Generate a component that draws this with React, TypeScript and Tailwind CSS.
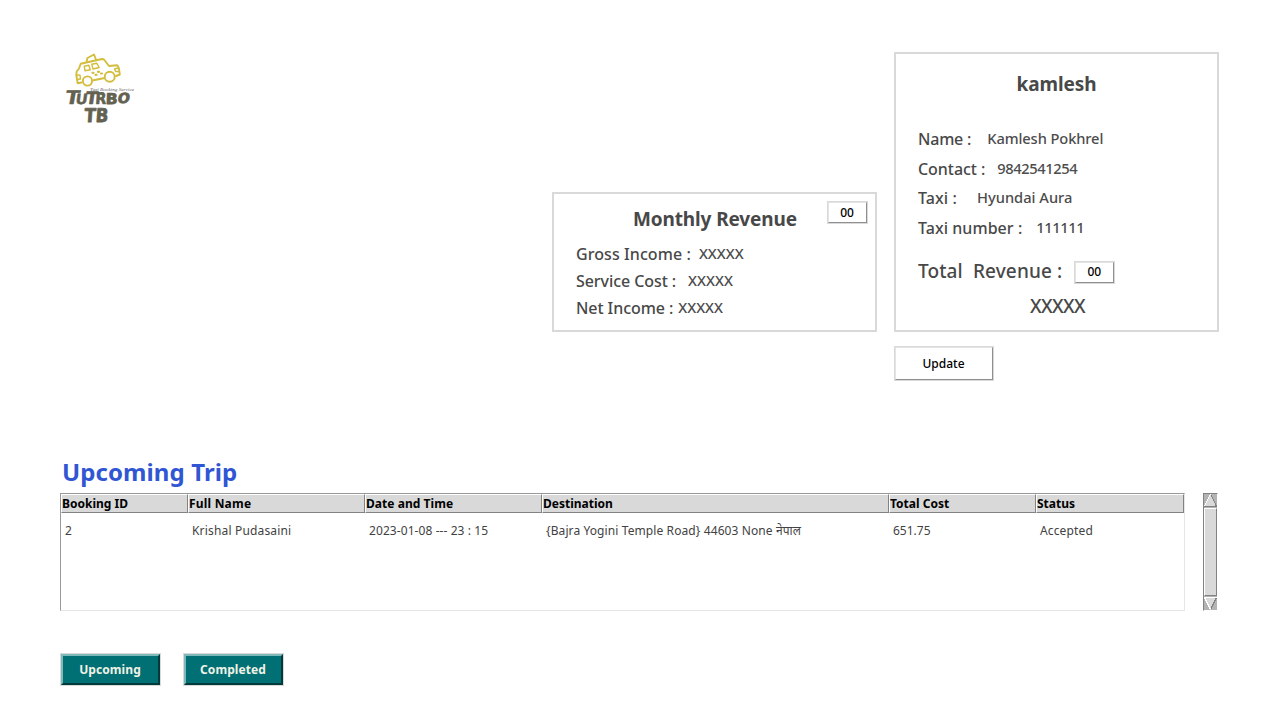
import type { ReactNode } from "react";

function Row({ label, value, className, gap, labelClass = "", valueClass = "" }: {
  label: string; value: string; className: string; gap: string; labelClass?: string; valueClass?: string;
}) {
  return (
    <div className={`flex items-center whitespace-pre font-medium ${className}`}>
      <span className={`text-[16px] ${labelClass} ${gap}`}>{label}</span>
      <span className={`pb-[1.5px] text-[14.67px] text-[#4c4c4c] ${valueClass}`}>{value}</span>
    </div>
  );
}

function PlainButton({ children, className }: { children: ReactNode; className: string }) {
  return (
    <button className={`shrink-0 border border-[#d9d9d9] text-[12px] font-medium text-black ${className}`}>
      <span className="flex h-full w-full items-center justify-center border border-t-[#e4e4e4] border-l-[#e4e4e4] border-r-[#8f8f8f] border-b-[#8f8f8f] pr-px">
        {children}
      </span>
    </button>
  );
}

function TealButton({ children }: { children: ReactNode }) {
  return (
    <button className="h-[33px] w-[101px] border border-[#d9d9d9] text-[12px] font-bold text-[#f2f2e6]">
      <span className="flex h-full w-full items-center justify-center border-2 border-t-[#7fb8b9] border-l-[#7fb8b9] border-r-[#003a3b] border-b-[#003a3b] bg-[#007074] pr-px tracking-[0.07px]">
        {children}
      </span>
    </button>
  );
}

function Logo() {
  return (
    <svg width="80" height="80" viewBox="0 0 80 80" className="block">
      <g fill="none" stroke="#d3bd3c" strokeWidth="1.9" strokeLinejoin="round" strokeLinecap="round">
        <path d="M21.5 30.5 L17.7 31.3 L16.3 23 L16.7 19.5 L19 16.5 L20.7 11.8 L42 7 L44 7.5 L49 14 L57 13.2 Q58.5 14 59 17 L59.8 22.5 L56 24" />
        <path d="M26.5 10 L27.5 6 L34 2.5 L36 7.5" />
        <path d="M17 23 L20 23.2 L20.5 27 L17.5 27.5 M58 16 L54.5 17 L55.5 19.5 L58.5 19.5" strokeWidth="1.4" />
        <path d="M24.3 14.3 L28.8 13.2 L30.3 17.8 L25 18.8 Z M31.8 12.3 L36.7 11.2 L39.2 15.5 L33 17 Z" strokeWidth="1.4" />
        <path d="M33.5 28.3 L43.5 26.3" />
        <circle cx="27.5" cy="29" r="4.6" />
        <circle cx="49.7" cy="24.8" r="5" />
        <path d="M32.5 20.8 h1 M35.5 22.8 h1 M38 19.8 h1 M41 21.5 h1" strokeWidth="2.2" />
      </g>
      <text x="30" y="38.8" fontSize="5" fontStyle="italic" fontFamily="Liberation Serif, serif" fill="#666" textLength="44" lengthAdjust="spacingAndGlyphs">Taxi Booking Service</text>
      <g fill="#636150" stroke="#636150" strokeLinejoin="round" fontFamily="DejaVu Sans, sans-serif" fontWeight="bold">
        <text transform="translate(4.5 52) skewX(-10)" fontSize="19" textLength="14" lengthAdjust="spacingAndGlyphs" strokeWidth="0.4">T</text>
        <text transform="translate(15 51.5) skewX(-8)" fontSize="14" textLength="12" lengthAdjust="spacingAndGlyphs" strokeWidth="0.4">U</text>
        <text transform="translate(25 52) skewX(-8)" fontSize="17" textLength="12" lengthAdjust="spacingAndGlyphs" strokeWidth="0.6">T</text>
        <text transform="translate(35 52) skewX(-4)" fontSize="16" textLength="11" lengthAdjust="spacingAndGlyphs" strokeWidth="0.6">R</text>
        <text transform="translate(45.5 51.5) skewX(-2)" fontSize="15" textLength="12" lengthAdjust="spacingAndGlyphs" strokeWidth="0.8">B</text>
        <text transform="translate(57 51) skewX(-10)" fontSize="14" textLength="12" lengthAdjust="spacingAndGlyphs" strokeWidth="0.8">O</text>
        <text transform="translate(24 70) skewX(-4)" fontSize="19" textLength="24" lengthAdjust="spacingAndGlyphs" strokeWidth="0.8">TB</text>
      </g>
    </svg>
  );
}

const columns = [
  { title: "Booking ID", value: "2", width: "w-[127px]", tracking: "", titleTracking: "" },
  { title: "Full Name", value: "Krishal Pudasaini", width: "w-[177px]", tracking: "tracking-[0.17px]", titleTracking: "tracking-[0.2px]" },
  { title: "Date and Time", value: "2023-01-08 --- 23 : 15", width: "w-[177px]", tracking: "tracking-[0.08px]", titleTracking: "tracking-[0.05px]" },
  { title: "Destination", value: "{Bajra Yogini Temple Road} 44603 None नेपाल", width: "w-[347px]", tracking: "tracking-[0.1px]", titleTracking: "" },
  { title: "Total Cost", value: "651.75", width: "w-[147px]", tracking: "", titleTracking: "" },
  { title: "Status", value: "Accepted", width: "w-[148px]", tracking: "tracking-[0.14px]", titleTracking: "" },
];

function Trips() {
  return (
    <div className="h-[118px] w-[1125px] border border-t-[#999] border-l-[#999] border-r-[#e6e6e6] border-b-[#e6e6e6]">
      <div className="flex h-[19px]">
        {columns.map((c) => (
          <div key={c.title} className={`flex shrink-0 items-center border border-t-white border-l-white border-r-[#828282] border-b-[#828282] bg-[#d9d9d9] text-[12px] leading-none font-bold text-black ${c.width} ${c.titleTracking}`}>
            {c.title}
          </div>
        ))}
      </div>
      <div className="flex h-[35px] items-center whitespace-pre text-[12px] text-[#424242]">
        {columns.map((c) => (
          <div key={c.title} className={`shrink-0 pl-1 ${c.width} ${c.tracking}`}>{c.value}</div>
        ))}
      </div>
    </div>
  );
}

function Scrollbar() {
  return (
    <div className="flex h-[118px] w-[15px] flex-col border border-t-[#828282] border-l-[#828282] border-r-white border-b-white bg-[#b3b3b3]">
      <svg width="13" height="13" viewBox="0 0 13 13" shapeRendering="crispEdges">
        <path d="M6.5 0 L13 13 L0 13 Z" fill="#d9d9d9" />
        <path d="M6.5 0 L12.5 12.5 H0" stroke="#828282" fill="none" />
        <path d="M6.5 0 L0.5 12" stroke="#fff" />
      </svg>
      <div className="my-px flex-1 border border-t-white border-l-white border-r-[#828282] border-b-[#828282] bg-[#d9d9d9]" />
      <svg width="13" height="13" viewBox="0 0 13 13" shapeRendering="crispEdges">
        <path d="M0 0 H13 L6.5 13 Z" fill="#d9d9d9" />
        <path d="M12.5 0.5 L6.5 12.5" stroke="#828282" />
        <path d="M13 0.5 H0.5 L6.5 12.5" stroke="#fff" fill="none" />
      </svg>
    </div>
  );
}

export default function App() {
  return (
    <div className="flex h-[720px] w-[1280px] flex-col overflow-hidden bg-white pt-[52px] pl-[60px] font-['Noto_Sans',sans-serif] text-[#484848]">
      <div className="flex h-[280px] shrink-0">
        <div className="w-[492px]"><Logo /></div>
        <section className="mr-[17px] h-[140px] w-[325px] self-end border-2 border-[#d9d9d9]">
          <div className="flex h-[46px] items-start justify-end pt-[7px] pr-[7px]">
            <h2 className="mr-[30px] pt-[4px] text-[19px] leading-[28px] font-bold tracking-[-0.12px]">Monthly Revenue</h2>
            <PlainButton className="h-[23px] w-[41px]">00</PlainButton>
          </div>
          <div className="pl-[22px]">
            <Row label="Gross Income :" value="XXXXX" className="h-[27px]" gap="mr-2" labelClass="tracking-[0.08px]" />
            <Row label="Service Cost :" value="XXXXX" className="h-[27px]" gap="mr-3" labelClass="tracking-[-0.07px]" />
            <Row label="Net Income :" value="XXXXX" className="h-[27px]" gap="mr-[5px]" labelClass="tracking-[-0.07px]" />
          </div>
        </section>
        <section className="h-[280px] w-[325px] border-2 border-[#d9d9d9] pl-[22px]">
          <h2 className="h-[70px] pt-[16px] pr-[22px] text-center text-[19px] leading-[28px] font-bold tracking-[-0.1px]">kamlesh</h2>
          <Row label="Name :" value="Kamlesh Pokhrel" className="h-[29px]" gap="mr-4" labelClass="tracking-[-0.2px]" valueClass="tracking-[-0.1px]" />
          <Row label="Contact :" value="9842541254" className="h-[31px]" gap="mr-3" labelClass="tracking-[-0.05px]" valueClass="tracking-[-0.39px]" />
          <Row label="Taxi :" value="Hyundai Aura" className="h-[28px]" gap="mr-5" labelClass="tracking-[0.1px]" />
          <Row label="Taxi number :" value="111111" className="h-[31px]" gap="mr-[14px]" labelClass="tracking-[0.05px]" valueClass="tracking-[-0.39px]" />
          <div className="flex h-[57px] items-center whitespace-pre text-[19px] font-medium">
            <span className="-mt-px mr-3 tracking-[0.12px]">Total  Revenue :</span>
            <PlainButton className="mt-px h-[23px] w-[41px]">00</PlainButton>
          </div>
          <div className="-mt-[7px] pr-[20px] text-center text-[19px] leading-[26px] font-medium tracking-[-0.6px]">XXXXX</div>
        </section>
      </div>
      <div className="flex h-[122px] shrink-0 pt-[14px] pl-[834px]">
        <PlainButton className="h-[35px] w-[100px]">Update</PlainButton>
      </div>
      <h1 className="h-[39px] shrink-0 pl-[2px] text-[24px] leading-[36px] font-bold tracking-[0.1px] text-[#3056d3]">Upcoming Trip</h1>
      <div className="flex shrink-0 gap-[18px]">
        <Trips />
        <Scrollbar />
      </div>
      <div className="flex gap-[22px] pt-[42px]">
        <TealButton>Upcoming</TealButton>
        <TealButton>Completed</TealButton>
      </div>
    </div>
  );
}
